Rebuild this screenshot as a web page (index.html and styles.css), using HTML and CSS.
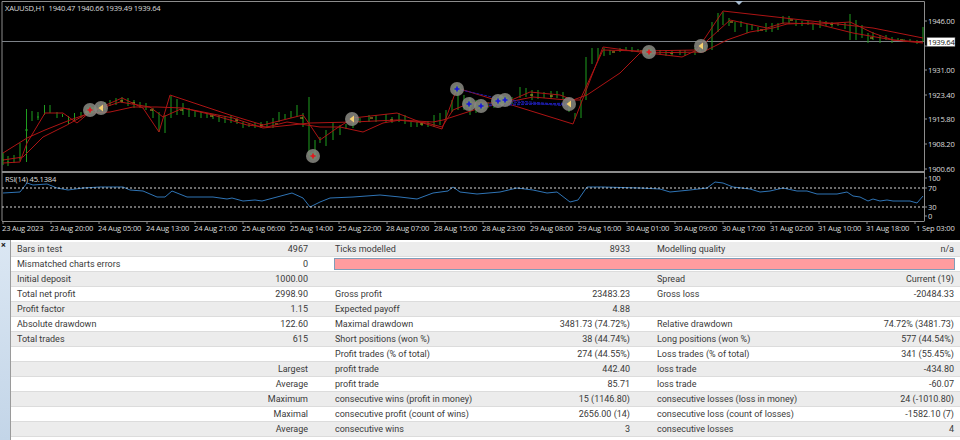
FILE: index.html
```html
<!DOCTYPE html>
<html lang="en">
<head>
<meta charset="utf-8">
<title>Strategy Tester Report</title>
<link rel="stylesheet" href="styles.css">
</head>
<body>
<div class="chart">
<svg class="chart-svg" width="960" height="240" viewBox="0 0 960 240" xmlns="http://www.w3.org/2000/svg">
  <g class="frame">
    <path d="M2 1.500H924.500M2 1.500V221M924.500 1.500V221M2 221.500H924.500"/>
    <path class="level" d="M2 41.500H924"/>
    <path class="sep" d="M2 172H924"/>
    <path d="M3 221V224M51 221V224M99 221V224M147 221V224M195 221V224M243 221V224M291 221V224M339 221V224M387 221V224M435 221V224M483 221V224M531 221V224M579 221V224M627 221V224M675 221V224M723 221V224M771 221V224M819 221V224M867 221V224M915 221V224"/>
    <path d="M925 21H927M925 46H927M925 70H927M925 95H927M925 119H927M925 144H927M925 169H927M925 178H927M925 188H927M925 207H927M925 216H927"/>
  </g>
  <path class="bars" d="M3 153V165M2 160h2M8 156V166M7 162h2M14 155V163M20 143V161M19 158h2M26.500 109V162M25 130h3M32 111V121M38 112V120M37 117h2M44.500 105V115M50 105V113M57 112V118M62.500 114V117M68.500 116V124M74.500 113V121M81 112V118M87 110V115M93 107V113M99 105V112M105 102V110M110 100V106M116 98V105M122 97V103M128 98V106M134 100V108M140 102V108M146 103V110M153 108V118M159 112V132M165 115V133M171 96V118M177 99V115M183 103V115M189 108V117M195 111V117M201 112V118M207 113V118M213 114V119M219 115V122M225 116V123M231 115V123M237 118V124M243 122V128M249 123V127M255 123V128M261 122V128M267 121V128M273 118V128M279 112V122M285 114V119M291 111V118M297 105V117M303 113V127M309 97V155M315 140V155M320 137V143M326 130V146M333 122V140M340 125V135M346 124V129M353 118V128M360 118V123M369 115V122M376 115V122M386 114V122M392 117V123M399 113V122M405 115V124M411 122V127M417 122V127M422 122V126M428 121V127M434 115V127M440 113V125M446 110V120M452 100V112M458 87V110M464 95V110M470 97V115M476 100V113M482 103V110M488 102V108M494 100V108M500 96V104M506 98V104M512 97V104M520 87V98M526 88V97M532 90V100M538 90V99M544 92V98M551 91V99M557 91V98M563 92V100M569 100V112M575 113V119M581 100V118M586 57V100M592 48V64M598 48V60M604 48V56M610 50V55M620 48V52M626 47V50M632 47V52M638 49V52M644 50V54M650 50V55M660 50V55M666 50V56M672 51V56M680 50V55M685 50V56M695 48V55M700 45V53M705 45V52M712 22V50M718 13V32M723 12V25M729 18V26M735 22V32M741 21V27M747 24V33M752 24V30M758 27V32M766 23V32M772 23V32M778 23V30M783 16V24M789 16V24M796 20V26M802 21V26M808 21V25M813 24V30M820 20V28M826 21V26M832 22V27M838 23V26M845 23V29M850 14V40M856 20V40M862 25V38M868 33V43M873 32V40M880 35V43M886 35V40M892 37V43M898 38V41M904 39V42M910 39V42M917 40V44M923 27V42"/>
  <path class="ticks" d="M85 112h3M120 101h3M132 103h3M150 110h3M180 110h3M210 116h3M235 120h3M260 125h3M275 124h3M300 118h3M370 118h3M390 120h3M420 124h3M530 95h3M550 96h3M612 52h3M640 51h3M670 53h3M730 22h3M760 30h3M790 20h3M830 24h3M870 38h3M900 40h3"/>
  <g class="ma">
    <path d="M3 163L20 162L27 143L45 113L63 113L77 123L90 112L122 98L143 108L159 132L170 95L230 115L263 125L303 115L310 125L320 140L337 128L353 118L397 113L420 122L442 129L457 88L573 124L603 47L640 52L682 57L697 50L723 11L873 28L923 38"/>
    <path d="M3 153L27 138L45 130L70 120L90 113L110 112L133 107L157 107L183 108L233 118L263 128L310 123L353 122L397 120L427 123L442 127L453 110L470 103L503 103L533 97L567 100L580 100L603 50L640 51L697 50L730 20L767 28L783 23L820 24L850 22L873 33L893 40L923 43"/>
    <path d="M3 160L23 157L43 137L67 125L90 112L120 102L150 107L163 117L183 108L213 115L247 125L267 127L287 122L320 127L340 127L363 132L383 123L400 120L433 122L443 120L480 108L507 102L530 92L560 95L573 100L587 95L620 73L640 53L703 52L727 40L750 32L773 28L787 24L813 23L853 33L893 40L923 42"/>
  </g>
  <path class="trade" d="M457 89L505 100M469 104L569 104M481 106L569 103M498 101L569 106M505 100L569 105"/>
  <path class="rsi" d="M3 193L20 192L27 183L33 185L47 184L57 188L68 190L83 188L100 187L123 187L130 190L143 191L157 197L165 197L172 191L187 197L213 197L227 199L232 198L243 201L255 200L262 201L277 197L292 193L303 198L310 207L320 202L330 198L353 197L380 195L400 197L417 199L433 193L448 191L453 187L460 192L477 194L500 192L517 188L533 190L547 193L557 192L570 202L578 200L587 187L603 187L640 188L660 189L670 192L690 190L707 188L715 182L723 183L733 187L750 189L760 192L770 191L783 188L797 191L807 191L817 194L837 194L847 192L853 196L860 197L868 201L873 199L880 201L887 200L893 201L910 201L917 203L923 196"/>
  <path class="dotted" d="M2 188H924M2 207H924"/>
  <path class="mark-top" d="M735 1H743L739 5Z"/>
  <g class="orders">
    <circle cx="90" cy="110" r="7"/><circle cx="101" cy="108" r="7"/><circle cx="313" cy="156" r="7"/><circle cx="352" cy="119" r="7"/><circle cx="457" cy="89" r="7"/><circle cx="469" cy="104" r="7"/><circle cx="481" cy="106" r="7"/><circle cx="498" cy="101" r="7"/><circle cx="505" cy="100" r="7"/><circle cx="569" cy="104" r="7"/><circle cx="649" cy="52" r="7"/><circle cx="701" cy="46" r="7"/>
  </g>
  <g class="halos">
    <circle cx="90" cy="110" r="4"/><circle cx="313" cy="156" r="4"/><circle cx="649" cy="52" r="4"/><circle cx="457" cy="89" r="4"/><circle cx="469" cy="104" r="4"/><circle cx="481" cy="106" r="4"/><circle cx="498" cy="101" r="4"/><circle cx="505" cy="100" r="4"/>
  </g>
  <path class="cross-red" d="M90 107.500V112.500M87.500 110H92.500M313 153.500V158.500M310.500 156H315.500M649 49.500V54.500M646.500 52H651.500"/>
  <path class="cross-blue" d="M457 86.500V91.500M454.500 89H459.500M469 101.500V106.500M466.500 104H471.500M481 103.500V108.500M478.500 106H483.500M498 98.500V103.500M495.500 101H500.500M505 97.500V102.500M502.500 100H507.500"/>
  <path class="tri" d="M103 104.500V111.500L98.500 108ZM354 115.500V122.500L349.500 119ZM571 100.500V107.500L566.500 104ZM703 42.500V49.500L698.500 46Z"/>
  <g class="label">
    <text x="5" y="11">XAUUSD,H1  1940.47 1940.66 1939.49 1939.64</text>
    <text x="5" y="182">RSI(14) 45.1384</text>
  </g>
  <g class="label">
    <text x="2" y="231">23 Aug 2023</text><text x="50" y="231">23 Aug 20:00</text><text x="98" y="231">24 Aug 05:00</text><text x="146" y="231">24 Aug 13:00</text><text x="194" y="231">24 Aug 21:00</text><text x="242" y="231">25 Aug 06:00</text><text x="290" y="231">25 Aug 14:00</text><text x="338" y="231">25 Aug 22:00</text><text x="386" y="231">28 Aug 07:00</text><text x="434" y="231">28 Aug 15:00</text><text x="482" y="231">28 Aug 23:00</text><text x="530" y="231">29 Aug 08:00</text><text x="578" y="231">29 Aug 16:00</text><text x="626" y="231">30 Aug 01:00</text><text x="674" y="231">30 Aug 09:00</text><text x="722" y="231">30 Aug 17:00</text><text x="770" y="231">31 Aug 02:00</text><text x="818" y="231">31 Aug 10:00</text><text x="866" y="231">31 Aug 18:00</text><text x="916" y="231">1 Sep 03:00</text>
  </g>
  <g class="label">
    <text x="928" y="23.500">1946.00</text><text x="928" y="73">1931.00</text><text x="928" y="97.500">1923.40</text><text x="928" y="122">1915.80</text><text x="928" y="147">1908.20</text><text x="928" y="171.500">1900.60</text>
    <text x="928" y="181">100</text><text x="928" y="191">70</text><text x="928" y="210">30</text><text x="928" y="219">0</text>
  </g>
  <rect class="price-box" x="927" y="37.500" width="28" height="9"/>
  <text class="price-text" x="928" y="45">1939.64</text>
</svg>
</div>
<div class="report">
  <div class="strip"><span class="close">×</span></div>
  <table class="stats">
    <colgroup><col class="c1"><col class="c2"><col class="c3"><col class="c4"><col class="c5"><col class="c6"></colgroup>
    <tbody>
      <tr><td>Bars in test</td><td class="num">4967</td><td>Ticks modelled</td><td class="num">8933</td><td>Modelling quality</td><td class="num">n/a</td></tr>
      <tr><td>Mismatched charts errors</td><td class="num">0</td><td colspan="4" class="barcell"><div class="errbar"></div></td></tr>
      <tr><td>Initial deposit</td><td class="num">1000.00</td><td></td><td></td><td>Spread</td><td class="num">Current (19)</td></tr>
      <tr><td>Total net profit</td><td class="num">2998.90</td><td>Gross profit</td><td class="num">23483.23</td><td>Gross loss</td><td class="num">-20484.33</td></tr>
      <tr><td>Profit factor</td><td class="num">1.15</td><td>Expected payoff</td><td class="num">4.88</td><td></td><td></td></tr>
      <tr><td>Absolute drawdown</td><td class="num">122.60</td><td>Maximal drawdown</td><td class="num">3481.73 (74.72%)</td><td>Relative drawdown</td><td class="num">74.72% (3481.73)</td></tr>
      <tr><td>Total trades</td><td class="num">615</td><td>Short positions (won %)</td><td class="num">38 (44.74%)</td><td>Long positions (won %)</td><td class="num">577 (44.54%)</td></tr>
      <tr><td></td><td></td><td>Profit trades (% of total)</td><td class="num">274 (44.55%)</td><td>Loss trades (% of total)</td><td class="num">341 (55.45%)</td></tr>
      <tr><td></td><td class="num">Largest</td><td>profit trade</td><td class="num">442.40</td><td>loss trade</td><td class="num">-434.80</td></tr>
      <tr><td></td><td class="num">Average</td><td>profit trade</td><td class="num">85.71</td><td>loss trade</td><td class="num">-60.07</td></tr>
      <tr><td></td><td class="num">Maximum</td><td>consecutive wins (profit in money)</td><td class="num">15 (1146.80)</td><td>consecutive losses (loss in money)</td><td class="num">24 (-1010.80)</td></tr>
      <tr><td></td><td class="num">Maximal</td><td>consecutive profit (count of wins)</td><td class="num">2656.00 (14)</td><td>consecutive loss (count of losses)</td><td class="num">-1582.10 (7)</td></tr>
      <tr><td></td><td class="num">Average</td><td>consecutive wins</td><td class="num">3</td><td>consecutive losses</td><td class="num">4</td></tr>
    </tbody>
  </table>
</div>
</body>
</html>
```
FILE: styles.css
```css
html, body { margin: 0; padding: 0; }
body { width: 960px; height: 440px; overflow: hidden; background: #fff; font-family: "Roboto", Arial, sans-serif; }

.chart { height: 240px; background: #000; }
.chart-svg { display: block; }
.frame path { fill: none; stroke: #8c8c8c; stroke-width: 1; }
.frame .level { stroke: #7d8288; }
.frame .sep { stroke: #8c8c8c; stroke-width: 2; }
.bars { fill: none; stroke: #1f9e1f; stroke-width: 1; }
.ticks { fill: none; stroke: #c9a52a; stroke-width: 1; }
.ma path { fill: none; stroke: #ad1414; stroke-width: 1; stroke-linejoin: round; }
.trade { fill: none; stroke: #1c1ca8; stroke-width: 1; stroke-dasharray: 3 1; }
.rsi { fill: none; stroke: #2f74b5; stroke-width: 1; }
.dotted { fill: none; stroke: #d8d8d8; stroke-width: 1; stroke-dasharray: 2 2; }
.mark-top { fill: #a8bcd0; }
.orders circle { fill: #8a8a82; fill-opacity: .85; }
.halos circle { fill: #6f8f6f; fill-opacity: .5; }
.cross-red { fill: none; stroke: #e8141c; stroke-width: 1.6; }
.cross-blue { fill: none; stroke: #1414e0; stroke-width: 1.6; }
.tri { fill: #f4d070; }
.label text { fill: #dcdcdc; font-size: 7.600px; letter-spacing: -.2px; font-family: "Open Sans", sans-serif; white-space: pre; }
.price-box { fill: #fff; stroke: #555; stroke-width: .5; }
.price-text { fill: #111; font-size: 7.600px; letter-spacing: -.2px; font-family: "Open Sans", sans-serif; }

.report { display: flex; height: 200px; }
.strip { width: 10px; flex: none; background: linear-gradient(to bottom, #dbe7f3, #c3d5e8); border-right: 1px solid #9a9a9a; }
.close { display: block; font-size: 9px; font-weight: bold; line-height: 9px; padding: 1px 0 0 1px; color: #222; }
.stats { width: 949px; align-self: flex-start; border-collapse: separate; border-spacing: 0; table-layout: fixed; font-size: 9px; color: #3a3a3a; margin-top: 1.500px; }
.c1 { width: 100px; } .c2 { width: 197px; } .c3 { width: 200px; } .c4 { width: 122px; } .c5 { width: 200px; } .c6 { width: 130px; }
.stats tr:nth-child(odd) { background: #ececec; }
.stats td { height: 15px; box-sizing: border-box; padding: 0 0 0 27px; white-space: nowrap; line-height: 14px; border-bottom: 1px solid #dcdcdc; }
.stats td:first-child { padding-left: 6px; }
.stats td.num { text-align: right; padding: 0; }
.stats td:last-child.num { padding-right: 6px; }
.stats td.barcell { padding: 0 5px 0 26px; }
.errbar { height: 12px; background: #ff9c9f; border: 1px solid #7f9db9; box-sizing: border-box; }
```
